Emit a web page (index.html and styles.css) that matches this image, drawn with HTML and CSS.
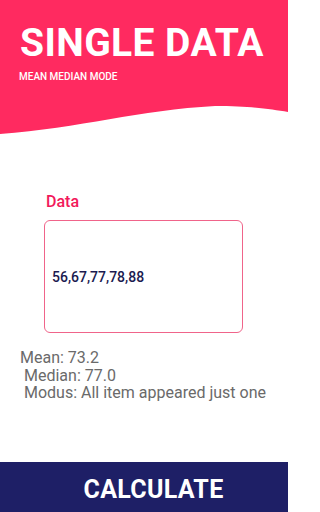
FILE: index.html
```html
<!DOCTYPE html>
<html>
<head>
<meta charset="utf-8">
<link rel="stylesheet" href="styles.css">
</head>
<body>
<div class="screen">
  <header class="header">
    <h1 class="title">SINGLE DATA</h1>
    <p class="subtitle">MEAN MEDIAN MODE</p>
  </header>
  <svg class="wave" viewBox="0 0 288 28" preserveAspectRatio="none" width="288" height="28">
    <path d="M0 0 H288 V6 C270 3 250 0 215 0 C140 4 80 22 0 28 Z" fill="#FF2A60"/>
  </svg>
  <main class="content">
    <label class="label">Data</label>
    <div class="input"><span class="input-text">56,67,77,78,88</span></div>
    <div class="results">Mean: 73.2
 Median: 77.0
 Modus: All item appeared just one</div>
  </main>
  <button class="calc">CALCULATE</button>
</div>
</body>
</html>
```
FILE: styles.css
```css
* { box-sizing: border-box; }
html, body { margin: 0; padding: 0; }
body { background: #ffffff; font-family: Roboto, "Liberation Sans", sans-serif; overflow: hidden; }
.screen { width: 288px; height: 512px; display: flex; flex-direction: column; overflow: hidden; }
.header { background: #FF2A60; height: 106px; padding: 23px 0 0 20px; }
.title { margin: 0; font-size: 39px; line-height: 40px; font-weight: 700; color: #fff; letter-spacing: 0.4px; white-space: nowrap; }
.subtitle { margin: 8px 0 0 -1px; font-size: 10px; line-height: 12px; font-weight: 500; color: #fff; letter-spacing: 0; }
.wave { display: block; flex: none; }
.content { display: flex; flex-direction: column; padding: 58px 0 0 0; }
.label { margin-left: 46px; font-size: 16px; line-height: 19px; font-weight: 500; color: #F2185A; }
.input { margin: 9px 0 0 44px; width: 199px; height: 113px; border: 1px solid #F0648A; border-radius: 6px; display: flex; align-items: center; padding-left: 7px; }
.input-text { font-size: 14px; font-weight: 500; color: #1B1B50; }
.results { margin: 16px 0 0 20px; white-space: pre; font-size: 16px; line-height: 17.7px; color: #6A6A6A; }
.calc { margin-top: auto; height: 50px; width: 100%; border: 0; background: #1E1F66; color: #fff; font-family: Roboto, "Liberation Sans", sans-serif; font-size: 25px; font-weight: 700; letter-spacing: 0.3px; padding: 4px 0 0 19px; }
```
